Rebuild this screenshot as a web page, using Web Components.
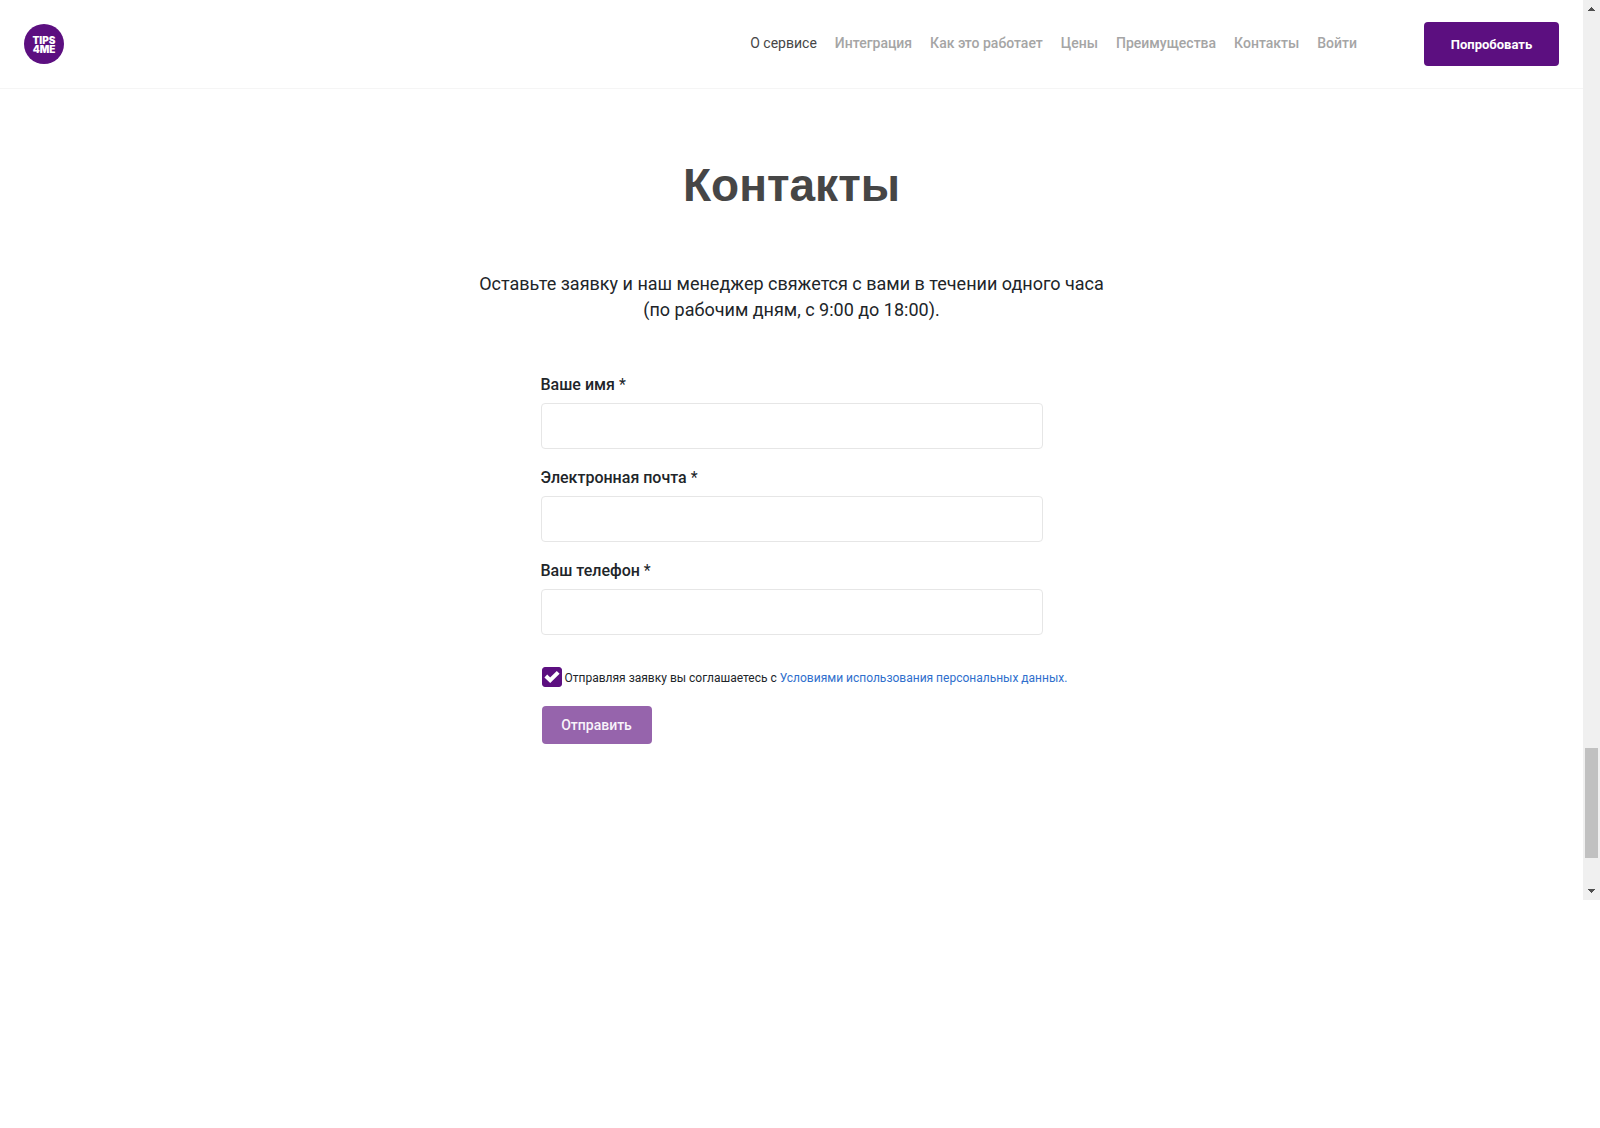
<!DOCTYPE html>
<html lang="ru">
<head>
<meta charset="utf-8">
<meta name="viewport" content="width=device-width, initial-scale=1">
<title>Tips4Me — Контакты</title>
<style>
body { margin: 0; background: #fff; font-family: Roboto, "Liberation Sans", sans-serif; color: #212529; }
</style>
</head>
<body>
<app-frame>
  <site-header>
    <nav-link href="#about" active>О сервисе</nav-link>
    <nav-link href="#integration">Интеграция</nav-link>
    <nav-link href="#how">Как это работает</nav-link>
    <nav-link href="#prices">Цены</nav-link>
    <nav-link href="#benefits">Преимущества</nav-link>
    <nav-link href="#contacts">Контакты</nav-link>
    <nav-link href="#login">Войти</nav-link>
  </site-header>
  <contact-section>
    <span slot="title">Контакты</span>
    <span slot="lead">Оставьте заявку и наш менеджер свяжется с вами в течении одного часа <br>(по рабочим дням, с 9:00 до 18:00).</span>
    <form-field name="name" type="text">Ваше имя</form-field>
    <form-field name="email" type="email">Электронная почта</form-field>
    <form-field name="phone" type="tel">Ваш телефон</form-field>
    <consent-check></consent-check>
    <submit-button>Отправить</submit-button>
  </contact-section>
</app-frame>

<script>
const define = (name, html, setup) => {
  const template = document.createElement('template');
  template.innerHTML = html;
  customElements.define(name, class extends HTMLElement {
    constructor() {
      super();
      this.attachShadow({ mode: 'open' }).append(template.content.cloneNode(true));
    }
    connectedCallback() { if (setup) setup(this, this.shadowRoot); }
  });
};

define('app-frame', `
  <style>
    :host { display: flex; }
    main { flex: 1; min-width: 0; }
  </style>
  <main><slot></slot></main>
  <page-scrollbar></page-scrollbar>`);

define('page-scrollbar', `
  <style>
    :host { display: flex; flex-direction: column; width: 17px; background: #f0f0f0; }
    svg { display: block; width: 17px; height: 17px; flex: none; }
    .before { flex: 731; }
    .thumb { flex: 110; margin: 0 2px; background: #c1c1c1; }
    .after { flex: 25; }
  </style>
  <svg viewBox="0 0 17 17" shape-rendering="crispEdges" fill="#505050"><path d="M8 7h1v1h1v1h1v1h1v1H5v-1h1V9h1V8h1z"/></svg>
  <div class="before"></div><div class="thumb"></div><div class="after"></div>
  <svg viewBox="0 0 17 17" shape-rendering="crispEdges" fill="#505050"><path d="M5 6h7v1h-1v1h-1v1H9v1H8V9H7V8H6V7H5z"/></svg>`);

define('site-logo', `
  <style>
    :host { display: block; }
    a { display: flex; flex-direction: column; justify-content: center; box-sizing: border-box; width: 40px; height: 40px;
        padding-top: 2px; border-radius: 50%; background: #5c0f80; color: #fff; text-align: center; text-decoration: none;
        font: 900 10px/9px Inter, sans-serif; }
  </style>
  <a href="#"><span>TIPS</span><span>4ME</span></a>`);

define('nav-link', `
  <style>
    :host { display: block; }
    a { color: #a5a5a5; font-weight: 500; text-decoration: none; }
    :host([active]) a { color: #464646; font-weight: 400; }
  </style>
  <a><slot></slot></a>`, (host, root) => {
    root.querySelector('a').href = host.getAttribute('href');
  });

define('site-header', `
  <style>
    :host { display: block; border-bottom: 1px solid #f5f5f5; }
    header { display: flex; align-items: center; height: 88px; padding: 0 24px; }
    nav { display: flex; gap: 18px; margin-left: auto; padding-bottom: 2px; font-size: 14px; line-height: 20px; }
    button { width: 135px; height: 44px; margin-left: 67px; padding: 2px 0 0; border: 0; border-radius: 4px; background: #5c0f80;
             color: #fff; font: 700 13px/20px Roboto, sans-serif; }
  </style>
  <header>
    <site-logo></site-logo>
    <nav><slot></slot></nav>
    <button type="button">Попробовать</button>
  </header>`);

define('contact-section', `
  <style>
    :host { display: block; padding: 68px 24px 156px; }
    h1 { margin: 0; text-align: center; color: #464646; font: 700 46px/56px "Liberation Sans", sans-serif; }
    p { margin: 58px 0 0; text-align: center; font-size: 18px; line-height: 26px; }
    form { box-sizing: border-box; max-width: 502px; margin: 50px auto 0; }
  </style>
  <h1><slot name="title"></slot></h1>
  <p><slot name="lead"></slot></p>
  <form><slot></slot></form>`);

define('form-field', `
  <style>
    :host { display: block; margin-bottom: 17px; }
    label { display: block; margin-bottom: 6px; font-size: 16px; line-height: 24px; font-weight: 500; }
    span { font-weight: 400; }
    input { display: block; box-sizing: border-box; width: 100%; height: 46px; padding: 0 12px;
            border: 1px solid #e6e6e6; border-radius: 4px; background: #fff; font: 16px/24px Roboto, sans-serif; }
  </style>
  <label for="field"><slot></slot> <span>*</span></label>
  <input id="field" required>`, (host, root) => {
    const input = root.querySelector('input');
    input.type = host.getAttribute('type');
    input.name = host.getAttribute('name');
  });

define('consent-check', `
  <style>
    :host { display: flex; align-items: center; gap: 3px; margin: 32px 0 19px 1px; font-size: 12px; line-height: 18px; white-space: nowrap; }
    .box { position: relative; display: block; width: 20px; height: 20px; flex: none; }
    input { appearance: none; display: block; width: 20px; height: 20px; margin: 0; border-radius: 3px; border: 1px solid #5c0f80; }
    input:checked { background: #5c0f80; }
    svg { position: absolute; inset: 0; display: none; pointer-events: none; }
    input:checked + svg { display: block; }
    label { padding-top: 2px; }
    a { color: #2f6fcd; text-decoration: none; }
  </style>
  <span class="box">
    <input id="agree" type="checkbox" checked>
    <svg width="20" height="20" viewBox="0 0 20 20" fill="none" stroke="#fff" stroke-width="4"><path d="M3.8 9 8.2 13.2 16.2 5.4"/></svg>
  </span>
  <label for="agree">Отправляя заявку вы соглашаетесь с <a href="#terms">Условиями использования персональных данных.</a></label>`);

define('submit-button', `
  <style>
    :host { display: flex; margin-left: 1px; }
    button { width: 110px; height: 38px; border: 0; border-radius: 4px; background: #9664ac; color: #f8f3fa;
             font: 500 14px/20px Roboto, sans-serif; }
  </style>
  <button type="button"><slot></slot></button>`);
</script>
</body>
</html>
